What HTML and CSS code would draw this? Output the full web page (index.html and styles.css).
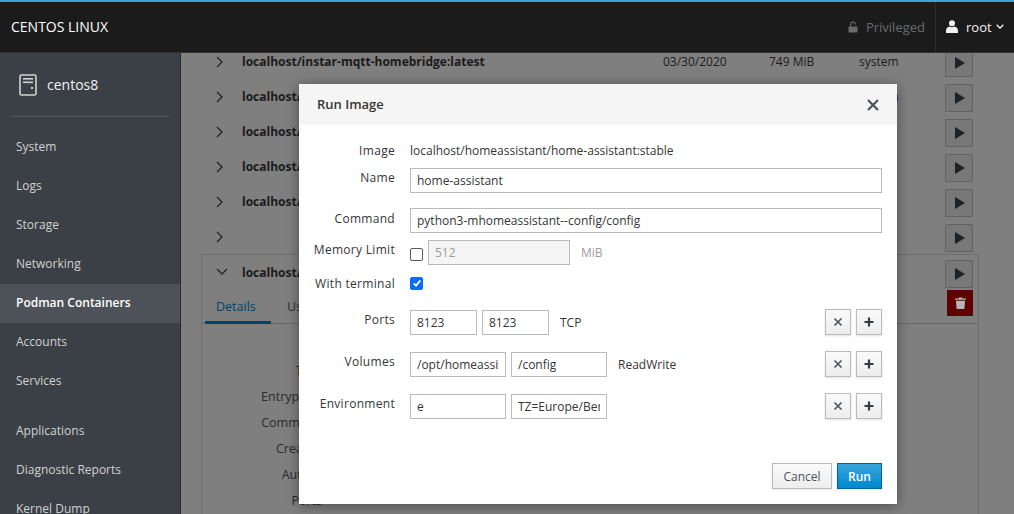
FILE: index.html
```html
<!DOCTYPE html>
<html lang="en">
  <head>
    <meta charset="UTF-8" />
    <title>Podman Containers - centos8</title>
    <link rel="stylesheet" href="styles.css">
  </head>
  <body>
    <header class="topbar">
      <span class="brand">CENTOS LINUX</span>
      <div class="top-right">
        <div class="privileged">
          <svg class="lock" viewBox="0 0 10 12" width="10" height="12"><path d="M2 5.500V3.200C2 1.700 3.300.5 5 .5s3 1.200 3 2.700V3.500H6.700v-.3C6.700 2.400 6 1.800 5 1.800s-1.700.6-1.700 1.400v2.300z"/><rect x="0.500" y="5.500" width="9" height="6" rx=".7"/></svg>
          <span>Privileged</span>
        </div>
        <div class="user">
          <svg viewBox="0 0 12 13" width="12" height="13"><circle cx="6" cy="3.300" r="3"/><path d="M0 13v-2.500C0 8.200 2 6.800 3.500 6.500c1.500 1 3.500 1 5 0C10 6.800 12 8.200 12 10.500V13z"/></svg>
          <span>root</span>
          <svg class="caret" viewBox="0 0 8 5" width="8" height="5"><path d="M.7.8 4 4l3.300-3.200" fill="none" stroke="currentColor" stroke-width="1.300"/></svg>
        </div>
      </div>
    </header>

    <div class="layout">
      <aside class="sidebar">
        <div class="host">
          <svg viewBox="0 0 18 22" width="18" height="22"><rect x="1" y="1" width="16" height="20" rx="1.500" fill="none" stroke="#d1d1d1" stroke-width="1.600"/><rect x="4" y="4" width="10" height="1.600" fill="#d1d1d1"/><rect x="4" y="7.500" width="10" height="1.600" fill="#d1d1d1"/><rect x="12" y="13" width="2" height="2" fill="#d1d1d1"/></svg>
          <span>centos8</span>
        </div>
        <nav class="menu">
          <a>System</a>
          <a>Logs</a>
          <a>Storage</a>
          <a>Networking</a>
          <a class="active">Podman Containers</a>
          <a>Accounts</a>
          <a>Services</a>
        </nav>
        <nav class="menu menu-tools">
          <a>Applications</a>
          <a>Diagnostic Reports</a>
          <a>Kernel Dump</a>
        </nav>
      </aside>

      <main class="content">
        <div class="rows">
          <div class="row">
            <svg class="chev" viewBox="0 0 8 12" width="8" height="12"><path d="M1 1l5 5-5 5" /></svg>
            <b class="img-name">localhost/instar-mqtt-homebridge:latest</b>
            <span class="date">03/30/2020</span>
            <span class="size">749 MiB</span>
            <span class="owner">system</span>
            <span class="play"><i></i></span>
          </div>
          <div class="row">
            <svg class="chev" viewBox="0 0 8 12" width="8" height="12"><path d="M1 1l5 5-5 5" /></svg>
            <b class="img-name">localhost/</b>
            <span class="date"></span>
            <span class="size"></span>
            <span class="owner">system</span>
            <span class="play"><i></i></span>
          </div>
          <div class="row">
            <svg class="chev" viewBox="0 0 8 12" width="8" height="12"><path d="M1 1l5 5-5 5" /></svg>
            <b class="img-name">localhost/</b>
            <span class="date"></span>
            <span class="size"></span>
            <span class="owner"></span>
            <span class="play"><i></i></span>
          </div>
          <div class="row">
            <svg class="chev" viewBox="0 0 8 12" width="8" height="12"><path d="M1 1l5 5-5 5" /></svg>
            <b class="img-name">localhost/</b>
            <span class="date"></span>
            <span class="size"></span>
            <span class="owner"></span>
            <span class="play"><i></i></span>
          </div>
          <div class="row">
            <svg class="chev" viewBox="0 0 8 12" width="8" height="12"><path d="M1 1l5 5-5 5" /></svg>
            <b class="img-name">localhost/</b>
            <span class="date"></span>
            <span class="size"></span>
            <span class="owner"></span>
            <span class="play"><i></i></span>
          </div>
          <div class="row">
            <svg class="chev" viewBox="0 0 8 12" width="8" height="12"><path d="M1 1l5 5-5 5" /></svg>
            <b class="img-name"></b>
            <span class="date"></span>
            <span class="size"></span>
            <span class="owner"></span>
            <span class="play"><i></i></span>
          </div>
        </div>

        <section class="expanded">
          <div class="row row-open">
            <svg class="chev" viewBox="0 0 12 8" width="12" height="8"><path d="M1 1l5 5 5-5" /></svg>
            <b class="img-name">localhost/</b>
            <div class="actions">
              <span class="play"><i></i></span>
              <span class="trash">
                <svg viewBox="0 0 12 13" width="11" height="12"><path d="M4 1.500V.5h4v1h4V3H0V1.500zM1 4h10l-.8 9H1.800z"/></svg>
              </span>
            </div>
          </div>
          <div class="tabs">
            <span class="tab tab-on">Details</span>
            <span class="tab">Usage</span>
          </div>
          <dl class="details">
            <dt>Tags</dt>
            <dt>Entrypoint</dt>
            <dt>Command</dt>
            <dt>Created</dt>
            <dt>Author</dt>
            <dt>Ports</dt>
          </dl>
        </section>

        <div class="modal">
          <div class="modal-head">
            <h4>Run Image</h4>
            <svg viewBox="0 0 12 12" width="12" height="12"><path d="M1 1l10 10M11 1L1 11" fill="none" stroke="#4d5258" stroke-width="2.200"/></svg>
          </div>
          <form class="modal-body">
            <div class="field f-image">
              <label>Image</label>
              <span>localhost/homeassistant/home-assistant:stable</span>
            </div>
            <div class="field f-name">
              <label>Name</label>
              <input class="wide" type="text" value="home-assistant" />
            </div>
            <div class="field f-command">
              <label>Command</label>
              <input class="wide" type="text" value="python3-mhomeassistant--config/config" />
            </div>
            <div class="field f-memory">
              <label>Memory Limit</label>
              <span class="check"></span>
              <input class="mem" type="text" value="512" disabled />
              <span class="unit">MiB</span>
            </div>
            <div class="field f-terminal">
              <label>With terminal</label>
              <span class="check checked">
                <svg viewBox="0 0 12 12" width="10" height="10"><path d="M2 6.500l2.800 2.700L10 3" fill="none" stroke="#fff" stroke-width="2.200"/></svg>
              </span>
            </div>
            <div class="field f-list">
              <label>Ports</label>
              <input class="port" type="text" value="8123" />
              <input class="port" type="text" value="8123" />
              <span class="extra">TCP</span>
              <span class="btns">
                <button type="button" class="sq"><svg viewBox="0 0 10 10" width="10" height="10"><path d="M1.500 1.500l7 7M8.500 1.500l-7 7" fill="none" stroke="#4d5258" stroke-width="1.600"/></svg></button>
                <button type="button" class="sq"><svg viewBox="0 0 10 10" width="10" height="10"><path d="M5 .5v9M.5 5h9" fill="none" stroke="#363b40" stroke-width="2.200"/></svg></button>
              </span>
            </div>
            <div class="field f-list">
              <label>Volumes</label>
              <input class="path" type="text" value="/opt/homeassistant" />
              <input class="path" type="text" value="/config" />
              <span class="extra">ReadWrite</span>
              <span class="btns">
                <button type="button" class="sq"><svg viewBox="0 0 10 10" width="10" height="10"><path d="M1.500 1.500l7 7M8.500 1.500l-7 7" fill="none" stroke="#4d5258" stroke-width="1.600"/></svg></button>
                <button type="button" class="sq"><svg viewBox="0 0 10 10" width="10" height="10"><path d="M5 .5v9M.5 5h9" fill="none" stroke="#363b40" stroke-width="2.200"/></svg></button>
              </span>
            </div>
            <div class="field f-list">
              <label>Environment</label>
              <input class="path" type="text" value="e" />
              <input class="path" type="text" value="TZ=Europe/Berlin" />
              <span class="btns">
                <button type="button" class="sq"><svg viewBox="0 0 10 10" width="10" height="10"><path d="M1.500 1.500l7 7M8.500 1.500l-7 7" fill="none" stroke="#4d5258" stroke-width="1.600"/></svg></button>
                <button type="button" class="sq"><svg viewBox="0 0 10 10" width="10" height="10"><path d="M5 .5v9M.5 5h9" fill="none" stroke="#363b40" stroke-width="2.200"/></svg></button>
              </span>
            </div>
          </form>
          <div class="modal-foot">
            <button type="button" class="btn">Cancel</button>
            <button type="button" class="btn btn-run">Run</button>
          </div>
        </div>
      </main>
    </div>
  </body>
</html>
```

FILE: styles.css
```css
* {
  margin: 0;
  padding: 0;
  box-sizing: border-box;
}

html,
body {
  height: 100%;
  overflow: hidden;
}

body {
  font-family: "Open Sans", "Noto Sans", sans-serif;
  font-size: 12px;
  color: #363636;
  background: #7f7f7f;
}

/* top bar */
.topbar {
  height: 53px;
  background: #1b1b1b;
  border-top: 2px solid #39a5dc;
  border-bottom: 1px solid #333;
  display: flex;
  justify-content: space-between;
  align-items: center;
  padding-left: 11px;
}

.brand {
  color: #fff;
  font-size: 14px;
  padding-bottom: 2px;
}

.top-right {
  display: flex;
  align-items: center;
  height: 100%;
}

.privileged {
  display: flex;
  align-items: center;
  gap: 8px;
  color: #686b6f;
  font-size: 13px;
  padding: 0 10px 1px 0;
}

.lock {
  fill: #686b6f;
}

.user {
  display: flex;
  align-items: center;
  height: 100%;
  color: #f1f1f1;
  fill: #f1f1f1;
  font-size: 13px;
  gap: 8px;
  width: 79px;
  padding: 0 0 1px 10px;
  border-left: 1px solid #292e34;
}

.user .caret {
  margin-left: -4px;
}

/* sidebar + content */
.layout {
  display: flex;
  height: 461px;
}

.sidebar {
  width: 181px;
  flex: none;
  background: #3a4045;
  border-right: 1px solid #292e34;
  color: #d1d1d1;
}

.host {
  display: flex;
  align-items: center;
  gap: 10px;
  height: 64px;
  margin: 0 11px;
  padding: 0 0 0 8px;
  border-bottom: 1px solid #51565b;
  color: #f1f1f1;
  font-size: 14px;
}

.menu {
  display: flex;
  flex-direction: column;
  margin-top: 11px;
}

.menu a {
  height: 39px;
  line-height: 38px;
  padding-left: 16px;
  font-size: 12px;
  color: #d1d1d1;
}

.menu a.active {
  background: #4d5258;
  color: #fff;
  font-weight: 600;
}

.content {
  flex: 1;
  position: relative;
  overflow: hidden;
  background: #7f7f7f;
  color: #1b1b1b;
}

.rows {
  padding: 0 40px 0 35px;
  margin-top: -9px;
}

.row {
  display: flex;
  align-items: center;
  height: 35px;
}

.chev {
  flex: none;
  width: 8px;
  fill: none;
  stroke: #1f2326;
  stroke-width: 1.300;
  margin-right: 18px;
}

.img-name {
  width: 421px;
  flex: none;
  font-size: 12px;
}

.date {
  width: 106px;
  flex: none;
}

.size {
  width: 90px;
  flex: none;
}

.owner {
  width: 86px;
  flex: none;
}

.play {
  display: flex;
  align-items: center;
  justify-content: center;
  width: 28px;
  height: 28px;
  margin-top: 3px;
  flex: none;
  border: 1px solid #626262;
  border-radius: 1px;
  background: #787878;
}

.play i {
  border-left: 10px solid #1e2226;
  border-top: 6px solid transparent;
  border-bottom: 6px solid transparent;
  margin-left: 1px;
}

/* the open row behind the dialog */
.expanded {
  margin-left: 20px;
  width: 778px;
  height: 300px;
  border: 1px solid #6e6e6e;
}

.row-open {
  position: relative;
  height: 34px;
  padding-left: 14px;
}

.row-open .chev {
  width: 12px;
  margin-right: 14px;
}

.actions {
  position: absolute;
  left: 743px;
  top: 5px;
  display: flex;
  flex-direction: column;
  gap: 2px;
}

.actions .play {
  margin-top: 0;
}

.trash {
  display: flex;
  align-items: center;
  justify-content: center;
  width: 26px;
  height: 26px;
  margin-left: 2px;
  background: #610000;
  fill: #b6b6b6;
}

.tabs {
  display: flex;
  gap: 5px;
  height: 35px;
  border-bottom: 1px solid #6a6a6a;
  padding-left: 3px;
}

.tab {
  padding: 0 11px;
  font-size: 12.500px;
  line-height: 36px;
  color: #2f2f2f;
}

.tab-on {
  width: 66px;
  color: #004368;
  border-bottom: 3px solid #004368;
  height: 35px;
}

.details {
  padding-top: 34px;
  width: 120px;
}

.details dt {
  height: 26px;
  font-size: 12.500px;
  text-align: right;
  line-height: 26px;
  color: #2b2b2b;
}

/* dialog */
.modal {
  position: absolute;
  left: 118px;
  top: 31px;
  width: 598px;
  height: 420px;
  background: #fff;
  box-shadow: 0 2px 12px rgba(0, 0, 0, 0.4);
  display: flex;
  flex-direction: column;
  color: #363636;
}

.modal-head {
  height: 41px;
  background: #f5f5f5;
  display: flex;
  align-items: center;
  justify-content: space-between;
  padding: 0 18px;
}

.modal-head h4 {
  font-size: 13px;
  font-weight: 600;
  color: #363636;
  padding-bottom: 2px;
}

.modal-body {
  flex: 1;
  padding-top: 17px;
}

.field {
  display: flex;
  align-items: center;
}

.field label {
  width: 96px;
  flex: none;
  text-align: right;
  margin-right: 15px;
  font-size: 12px;
  letter-spacing: 0.300px;
}

input {
  font-family: inherit;
  font-size: 12px;
  color: #363636;
  height: 25px;
  border: 1px solid #bbb;
  padding: 0 6px;
  outline: none;
  background: #fff;
}

.wide {
  width: 472px;
}

.f-image {
  height: 16px;
}

.f-name {
  height: 25px;
  margin-top: 10px;
}

.f-name label,
.f-memory label,
.f-list label {
  position: relative;
  top: -3px;
}

.f-command label {
  position: relative;
  top: -2px;
}

.f-command {
  margin-top: 15px;
}

.f-memory {
  margin-top: 7px;
}

.f-memory .check {
  margin-top: 4px;
}

.f-terminal {
  margin-top: 6px;
  height: 24px;
}

.f-list {
  margin-top: 16px;
}

.f-terminal + .f-list {
  margin-top: 14px;
}

.check {
  display: flex;
  align-items: center;
  justify-content: center;
  width: 13px;
  height: 13px;
  border: 1px solid #5c5c5c;
  border-radius: 2px;
  flex: none;
  background: #fff;
}

.checked {
  background: #0a6cf5;
  border-color: #0a6cf5;
}

.mem {
  width: 142px;
  margin-left: 5px;
  background: #f5f5f5;
  color: #9c9c9c;
}

.unit {
  margin-left: 11px;
  color: #9c9c9c;
}

.port {
  width: 67px;
  margin-right: 5px;
}

.path {
  width: 96px;
  margin-right: 5px;
}

.extra {
  margin-left: 6px;
}

.btns {
  margin-left: auto;
  margin-right: 15px;
  display: flex;
  gap: 5px;
}

.sq {
  display: flex;
  align-items: center;
  justify-content: center;
  width: 26px;
  height: 26px;
  border: 1px solid #bbb;
  background: linear-gradient(#fafafa, #ededed);
  box-shadow: 0 1px 2px rgba(0, 0, 0, 0.12);
}

.modal-foot {
  display: flex;
  justify-content: flex-end;
  gap: 5px;
  padding: 0 15px 15px;
}

.btn {
  font-family: inherit;
  font-size: 12px;
  height: 26px;
  width: 60px;
  border: 1px solid #bbb;
  background: linear-gradient(#fafafa, #ededed);
  color: #4d5258;
  box-shadow: 0 1px 2px rgba(0, 0, 0, 0.1);
}

.btn-run {
  width: 45px;
  color: #fff;
  font-weight: 600;
  border-color: #00659c;
  background: linear-gradient(#39a5dc, #0088ce);
}
```
